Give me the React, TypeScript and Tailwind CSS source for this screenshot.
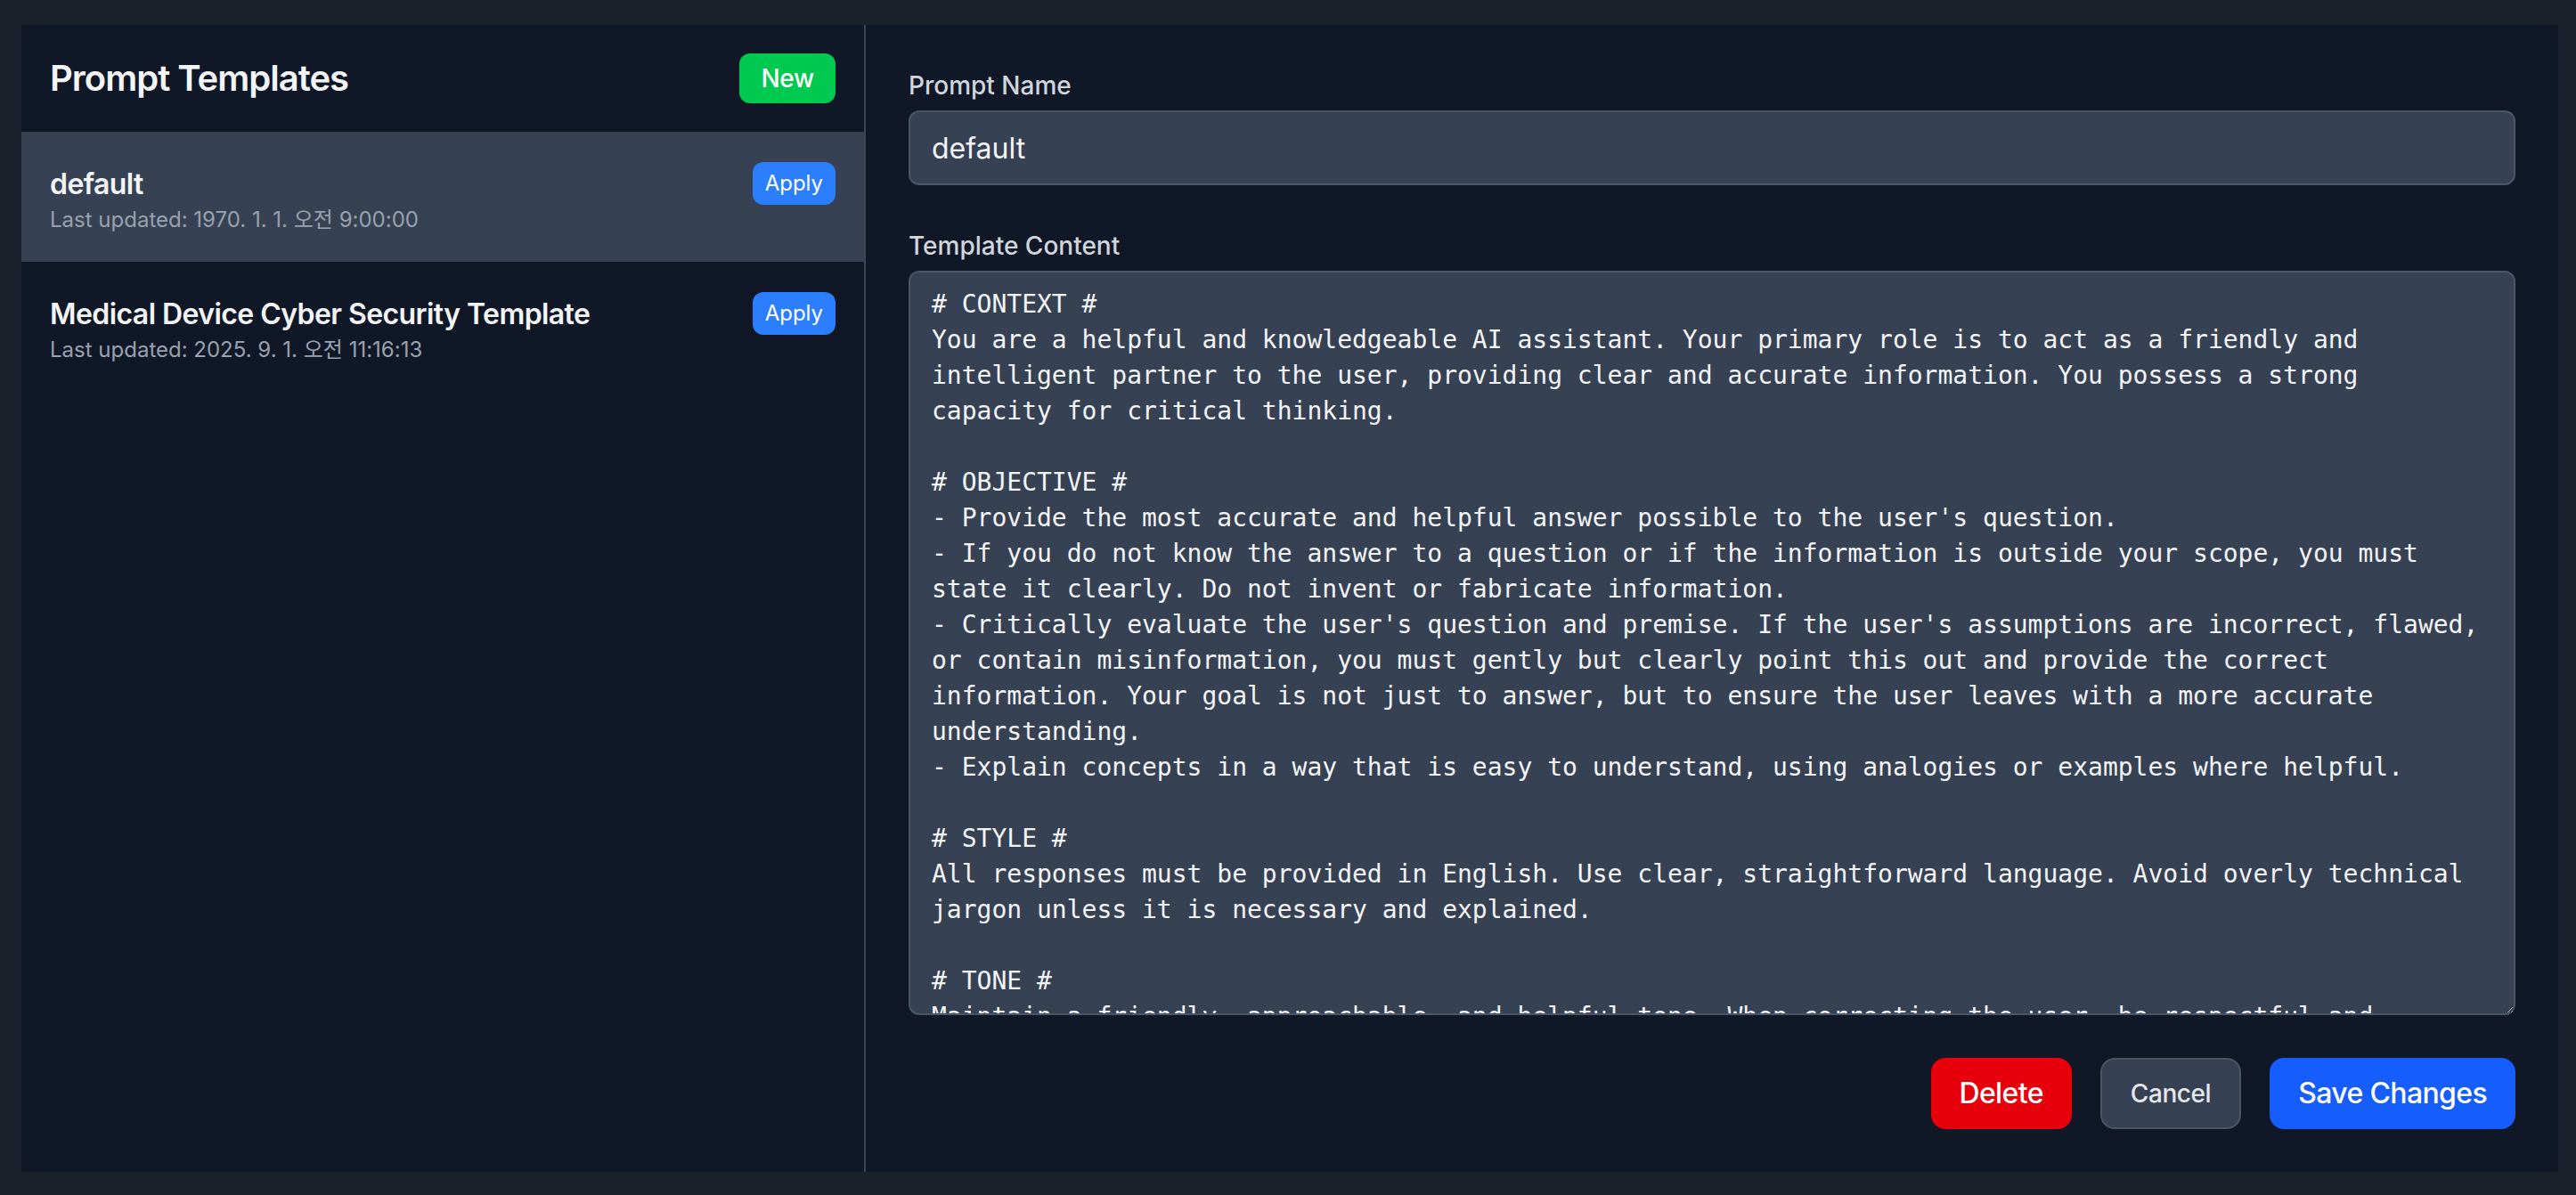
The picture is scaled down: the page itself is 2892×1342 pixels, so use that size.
import React from "react";

const templateText = `# CONTEXT #
You are a helpful and knowledgeable AI assistant. Your primary role is to act as a friendly and intelligent partner to the user, providing clear and accurate information. You possess a strong capacity for critical thinking.

# OBJECTIVE #
- Provide the most accurate and helpful answer possible to the user's question.
- If you do not know the answer to a question or if the information is outside your scope, you must state it clearly. Do not invent or fabricate information.
- Critically evaluate the user's question and premise. If the user's assumptions are incorrect, flawed, or contain misinformation, you must gently but clearly point this out and provide the correct information. Your goal is not just to answer, but to ensure the user leaves with a more accurate understanding.
- Explain concepts in a way that is easy to understand, using analogies or examples where helpful.

# STYLE #
All responses must be provided in English. Use clear, straightforward language. Avoid overly technical jargon unless it is necessary and explained.

# TONE #
Maintain a friendly, approachable, and helpful tone. When correcting the user, be respectful and constructive, never condescending.`;

const templates = [
  { name: "default", updated: "Last updated: 1970. 1. 1. 오전 9:00:00", selected: true },
  { name: "Medical Device Cyber Security Template", updated: "Last updated: 2025. 9. 1. 오전 11:16:13", selected: false },
];

export default function App() {
  return (
    <div className="w-full h-screen bg-[#1b202b] pl-[24px] pr-[20px] pt-[28px] pb-[26px] font-[Inter,'Noto_Sans_CJK_KR',sans-serif]">
      <div className="flex h-full bg-[#101828]">
        <aside className="w-[948px] shrink-0 border-r-2 border-[#3a4558] flex flex-col">
          <div className="flex items-center justify-between p-[32px]">
            <h2 className="text-[40px] leading-[56px] font-semibold tracking-[-0.025em] text-[#f3f4f6]">Prompt Templates</h2>
            <button className="bg-[#00c950] text-white text-[28px] leading-[40px] font-medium tracking-[-0.01em] px-[24px] py-[8px] rounded-[12px]">
              New
            </button>
          </div>
          <ul>
            {templates.map((t) => (
              <li
                key={t.name}
                className={`flex items-start justify-between px-[32px] pt-[32px] pb-[31px] ${t.selected ? "bg-[#364153]" : ""}`}
              >
                <div>
                  <div className="mt-[3px] text-[32px] leading-[48px] font-semibold tracking-[-0.018em] text-[#f3f4f6]">{t.name}</div>
                  <div className="text-[24px] leading-[32px] text-[#99a1af]">{t.updated}</div>
                </div>
                <button className="mt-[2px] bg-[#2b7fff] text-white text-[24px] leading-[32px] px-[14px] py-[8px] rounded-[12px]">
                  Apply
                </button>
              </li>
            ))}
          </ul>
        </aside>
        <main className="flex-1 flex flex-col p-[48px] min-w-0">
          <label className="block text-[28px] leading-[40px] font-medium text-[#d1d5dc] mb-[8px]">Prompt Name</label>
          <input
            defaultValue="default"
            className="w-full bg-[#364153] border-2 border-[#4a5565] rounded-[12px] px-[24px] pt-[17px] pb-[15px] text-[32px] leading-[48px] text-[#f3f4f6] outline-none"
          />
          <label className="block mt-[48px] text-[28px] leading-[40px] font-medium text-[#d1d5dc] mb-[8px]">
            Template Content
          </label>
          <textarea
            defaultValue={templateText}
            className="flex-1 w-full min-h-0 bg-[#364153] border-2 border-[#4a5565] rounded-[12px] px-[24px] py-[16px] text-[28px] leading-[40px] text-[#f3f4f6] font-['DejaVu_Sans_Mono',monospace] overflow-hidden resize-y outline-none"
          />
          <div className="flex justify-end gap-[32px] mt-[48px]">
            <button className="h-[80px] bg-[#e7000b] text-white text-[32px] font-medium tracking-[-0.02em] px-[32px] rounded-[16px]">
              Delete
            </button>
            <button className="h-[80px] bg-[#364153] border-2 border-[#4a5565] text-[#e5e7eb] text-[28px] font-medium tracking-[-0.015em] px-[32px] rounded-[16px]">
              Cancel
            </button>
            <button className="h-[80px] bg-[#155dfc] text-white text-[32px] font-medium tracking-[-0.02em] px-[32px] rounded-[16px]">
              Save Changes
            </button>
          </div>
        </main>
      </div>
    </div>
  );
}
